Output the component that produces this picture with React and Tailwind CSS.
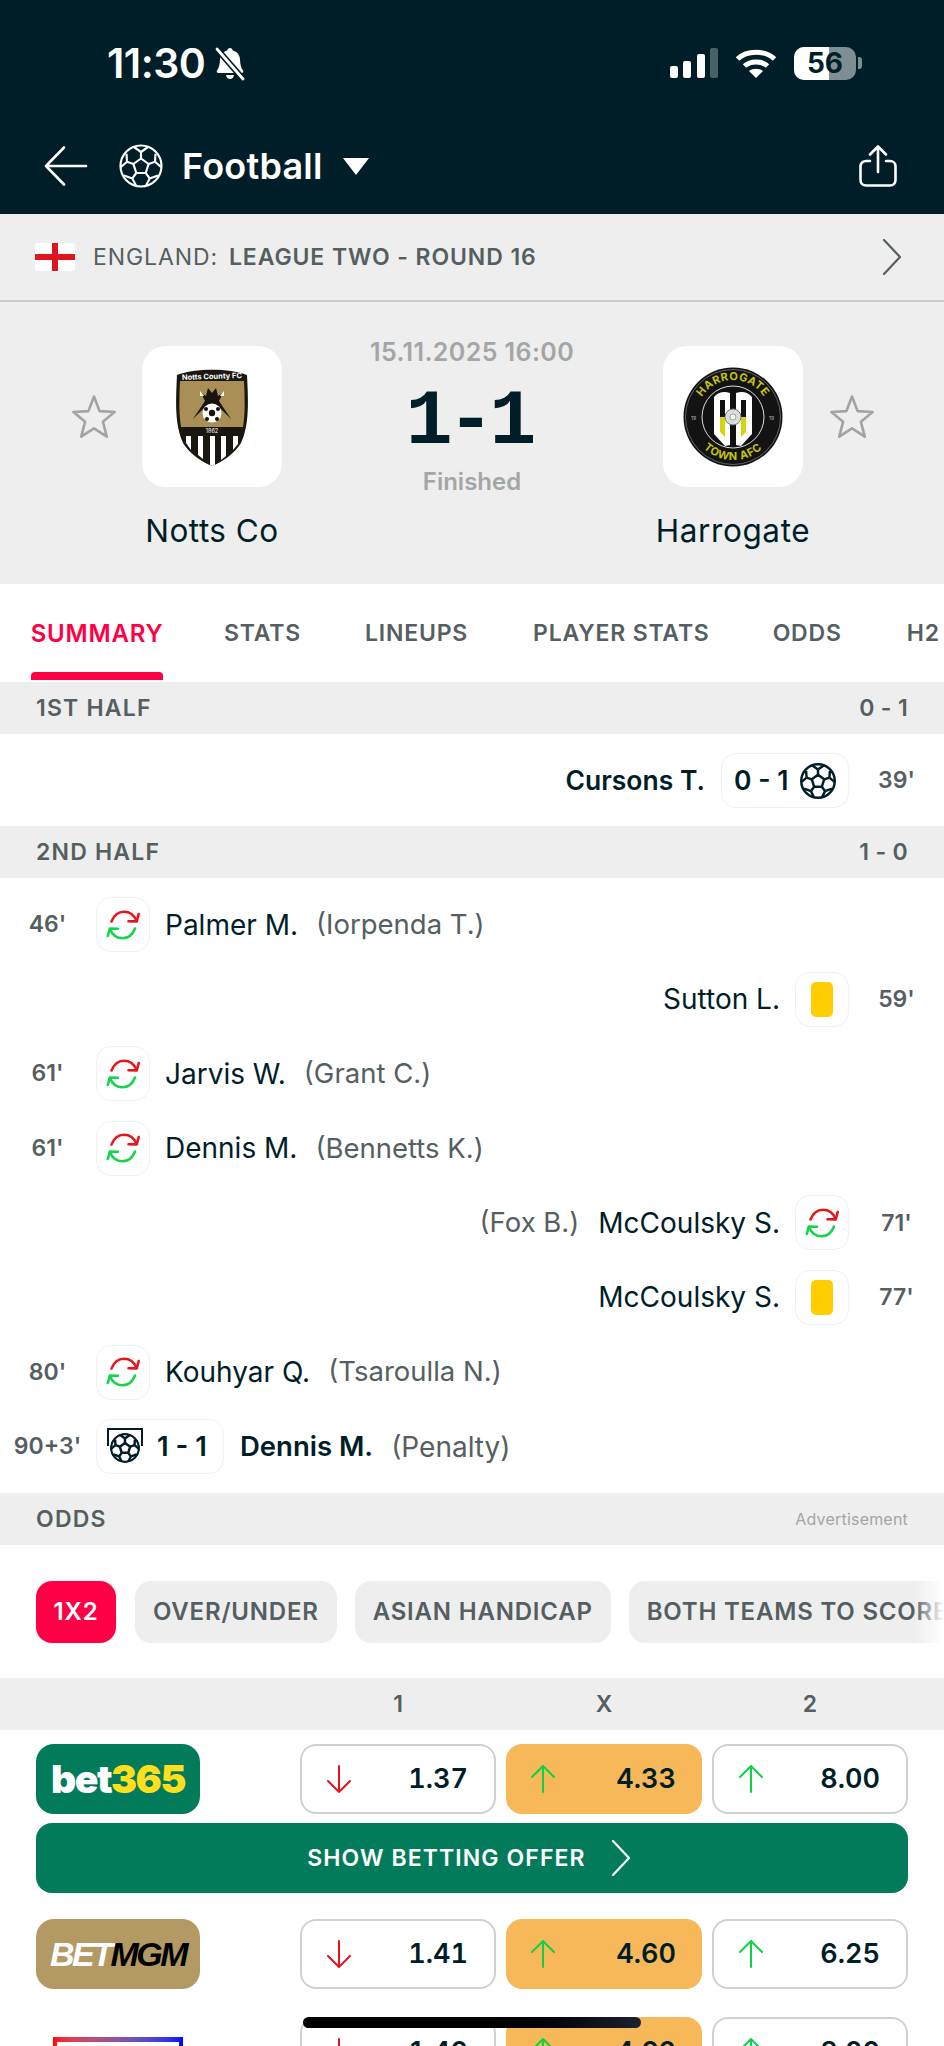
import React from 'react';

const BallIcon = ({ className = '', color = '#fff', sw = 1.8 }) => (
    <svg viewBox="0 0 44 44" className={className} fill="none" stroke={color} strokeWidth={sw * 1.2} strokeLinejoin="round">
        <circle cx="22" cy="22" r="20.5" />
        <path d="M22 14.5l7.6 5.500-2.900 9h-9.400l-2.900-9z" />
        <path d="M22 14.5V8M29.600 20l6.400-2.200M26.700 29l4 5.400M17.300 29l-4 5.400M14.400 20L8 17.800" />
        <path d="M22 8l-7-5M22 8l7-5M36 17.800l.5-8M36 17.800l6 5.200M30.700 34.400l8.300-3M30.700 34.400l-3.700 7.100M13.300 34.400l-8.300-3M13.300 34.400l3.700 7.100M8 17.800l-.5-8M8 17.800l-6 5.200" />
    </svg>
);

const SubIcon = () => (
    <svg viewBox="0 0 36 30" className="w-[36px] h-[30px]" fill="none" strokeWidth="2.600" strokeLinecap="round" strokeLinejoin="round">
        <path d="M6.500 11.500C9 5 14 1.800 19 1.800c6 0 10 3 12.500 9" stroke="#e8141c" />
        <path d="M23.500 11.200l8.200.2 2-7.400" stroke="#e8141c" />
        <path d="M30 18.500c-2.500 6.500-7.500 9.700-12.500 9.700-6 0-10-3-12.500-9" stroke="#17d44f" />
        <path d="M13 18.800l-8.200-.2-2 7.400" stroke="#17d44f" />
    </svg>
);

const CardIcon = () => <div className="w-[22px] h-[35px] rounded-[5px] bg-[#ffcd00]" />;

const IconBox = ({ children }) => (
    <div className="w-[54px] h-[55px] shrink-0 rounded-[15px] border border-[#f0f0f0] bg-white flex items-center justify-center">
        {children}
    </div>
);

const Star = ({ className = '' }) => (
    <svg viewBox="0 0 44 44" className={className} fill="none" stroke="#a3a3a3" strokeWidth="2.600" strokeLinejoin="round">
        <path d="M22 2.500l5.600 14.600 15 .9-11.700 9.800 3.900 14.900L22 34.400 9.200 42.700l3.900-14.900L1.400 18l15-.9z" />
    </svg>
);

const NottsLogo = () => (
    <svg viewBox="0 0 74 100" className="w-[74px] h-[100px]">
        <path d="M2 8C20 1 54 1 72 8c1.500 30 2 50-6 68-6 10-20 20-29 23-9-3-23-13-29-23C0 58 .5 38 2 8z" fill="#1a1710" />
        <path d="M5 14h64c1 20 1 34-1 46H6C4 48 4 34 5 14z" fill="#a98e55" />
        <text x="37" y="12" textAnchor="middle" fontSize="7.500" fontWeight="700" fill="#fff" fontFamily="Inter, sans-serif" transform="rotate(-2 37 12)">Notts County FC</text>
        <path d="M18 52l12-18-4-8 5 3 2-8 4 5 4-5 2 8 5-3-4 8 12 18-12-12H30z" fill="#17140f" />
        <path d="M25 24l4 5-4 0zM49 24l-4 5 4 0z" fill="#fff" />
        <circle cx="37" cy="46" r="9.500" fill="#fff" />
        <circle cx="37" cy="46" r="3.200" fill="#17140f" />
        <circle cx="31" cy="42" r="2" fill="#17140f" />
        <circle cx="43" cy="42" r="2" fill="#17140f" />
        <circle cx="32" cy="52" r="2" fill="#17140f" />
        <circle cx="42" cy="52" r="2" fill="#17140f" />
        <text x="37" y="66" textAnchor="middle" fontSize="5.500" fill="#fff" fontFamily="Inter, sans-serif">1862</text>
        <path d="M11 69h5v14l-5-7zM23 69h5v23l-5-4zM35 69h5v29l-3 1-2-1zM46 69h5v20l-5 4zM58 69h5v8l-5 6z" fill="#fff" />
    </svg>
);

const HarrogateLogo = () => (
    <svg viewBox="0 0 100 100" className="w-[100px] h-[100px]">
        <defs>
            <path id="arcTop" d="M13 50a37 37 0 0 1 74 0" />
            <path id="arcBottom" d="M7 50a43 43 0 0 0 86 0" />
        </defs>
        <circle cx="50" cy="50" r="49.500" fill="#131313" />
        <circle cx="50" cy="50" r="47.500" fill="none" stroke="#777" strokeWidth=".8" />
        <circle cx="50" cy="50" r="31" fill="#111" stroke="#ddd" strokeWidth="1" />
        <text fontSize="11" fontWeight="700" fill="#c5c40c" fontFamily="Inter, sans-serif" letterSpacing=".6">
            <textPath href="#arcTop" startOffset="50%" textAnchor="middle">HARROGATE</textPath>
        </text>
        <text fontSize="11" fontWeight="700" fill="#c5c40c" fontFamily="Inter, sans-serif" letterSpacing=".6">
            <textPath href="#arcBottom" startOffset="50%" textAnchor="middle">TOWN AFC</textPath>
        </text>
        <text x="8" y="53" fontSize="5" fill="#bbb" fontFamily="Inter, sans-serif">19</text>
        <text x="86" y="53" fontSize="5" fill="#bbb" fontFamily="Inter, sans-serif">19</text>
        <path d="M31 30c4-5 10-6 16-4v52l-5 1-11-12z" fill="#fff" />
        <path d="M69 30c-4-5-10-6-16-4v52l5 1 11-12z" fill="#fff" />
        <path d="M37 33h5v32l-5-4zM58 33h5v28l-5 4z" fill="#111" />
        <path d="M37 50h5v20l-5-5zM58 50h5v15l-5 5z" fill="#d7d40e" />
        <circle cx="50" cy="50" r="8" fill="#d9dde0" stroke="#777" strokeWidth="1" />
        <circle cx="50" cy="50" r="3" fill="#f5f5f5" stroke="#888" strokeWidth=".7" />
    </svg>
);

const SectionHeader = ({ left, right, rightClass = 'text-[#555e61] text-[23px] font-semibold tracking-[0.3px]' }) => (
    <div className="h-[52px] bg-[#eeeeee] flex items-center justify-between pl-[36px] pr-[36px] shrink-0">
        <span className="text-[23px] font-semibold tracking-[1.2px] text-[#555e61]">{left}</span>
        <span className={rightClass}>{right}</span>
    </div>
);

const Time = ({ children }) => (
    <div className="w-[95px] shrink-0 text-center text-[23px] font-semibold text-[#555e61] whitespace-nowrap">
        {children}
    </div>
);

const LeftRow = ({ time, icon, name, sub }) => (
    <div className="h-[55px] flex items-center">
        <Time>{time}</Time>
        <div className="ml-[1px]"><IconBox>{icon}</IconBox></div>
        <span className="ml-[15px] text-[28px] text-[#001e28]">{name}</span>
        <span className="ml-[18px] text-[27.5px] text-[#555e61]">{sub}</span>
    </div>
);

const RightRow = ({ time, icon, name, sub }) => (
    <div className="h-[55px] flex items-center justify-end">
        {sub && <span className="mr-[19px] text-[27.5px] text-[#555e61]">{sub}</span>}
        <span className="mr-[15px] text-[28px] text-[#001e28]">{name}</span>
        <IconBox>{icon}</IconBox>
        <Time>{time}</Time>
    </div>
);

const Arrow = ({ dir }) =>
    dir === 'down' ? (
        <svg viewBox="0 0 26 28" className="w-[26px] h-[28px]" fill="none" stroke="#e8141c" strokeWidth="2" strokeLinecap="round">
            <path d="M13 1v26M2 16l11 11 11-11" />
        </svg>
    ) : (
        <svg viewBox="0 0 26 28" className="w-[26px] h-[28px]" fill="none" stroke="#0ed145" strokeWidth="2" strokeLinecap="round">
            <path d="M13 27V1M2 12L13 1l11 11" />
        </svg>
    );

const OddBox = ({ value, dir, highlight }) => (
    <div className={`h-[70px] w-[196px] shrink-0 rounded-[16px] flex items-center justify-between pl-[24px] pr-[26px] ${highlight ? 'bg-[#f6b858]' : 'bg-white border-2 border-[#cfd2d3]'}`}>
        <Arrow dir={dir} />
        <span className="text-[27px] font-semibold tabular-nums text-[#001e28]">{value}</span>
    </div>
);

const OddsRow = ({ logo, odds }) => (
    <div className="flex items-start">
        <div className="w-[264px] shrink-0">{logo}</div>
        <div className="flex gap-[10px]">
            {odds.map((o, i) => (
                <OddBox key={i} value={o[0]} dir={o[1]} highlight={i === 1} />
            ))}
        </div>
    </div>
);

const Bet365 = () => (
    <div className="w-[164px] h-[70px] rounded-[18px] bg-[#027b5b] flex items-center justify-center text-[39px] font-black tracking-[-1.500px]">
        <span className="text-white">bet</span>
        <span className="text-[#ffdf1b]">365</span>
    </div>
);

const BetMgm = () => (
    <div className="w-[164px] h-[70px] rounded-[18px] bg-[#b39a64] flex items-center justify-center text-[34px] italic font-black tracking-[-2.500px] font-['Liberation_Sans',sans-serif]">
        <span className="text-white">BET</span>
        <span className="text-black">MGM</span>
    </div>
);

const Betfred = () => (
    <div className="w-[164px] h-[70px] flex justify-center pt-[20px]">
        <div className="w-[130px] h-[40px] bg-gradient-to-r from-[#ff0000] to-[#0000ff] pt-[5px] px-[4px]">
            <div className="h-full bg-white text-center text-[25px] font-black leading-[30px] tracking-[1px] text-black">BETFRED</div>
        </div>
    </div>
);

const App = () => {
    const chips = ['OVER/UNDER', 'ASIAN HANDICAP', 'BOTH TEAMS TO SCORE'];

    return (
        <div className="w-[944px] h-[2046px] overflow-hidden bg-white relative font-['Inter',sans-serif]">
            {/* status bar + top nav */}
            <div className="h-[214px] bg-[#001e28] px-[36px] text-white flex flex-col">
                <div className="h-[48px] mt-[40px] flex items-center justify-between">
                    <div className="flex items-center ml-[71px] gap-[9px]">
                        <span className="text-[41px] font-semibold tracking-[-0.5px]">11:30</span>
                        <svg viewBox="0 0 32 34" className="w-[32px] h-[34px]" fill="#fff">
                            <path d="M16 1c1.500 0 2.500 1 2.700 2.500 4.500 1 7 4.500 7.300 9 .2 4.500.8 8 3 11 .8 1.200 0 2.500-1.500 2.500H4.500C3 26 2.200 24.700 3 23.500c2.200-3 2.800-6.500 3-11 .3-4.500 2.800-8 7.300-9C13.500 2 14.500 1 16 1z" />
                            <path d="M12 28h8c-.4 2.500-2 4-4 4s-3.600-1.500-4-4z" />
                            <path d="M3 2l26 30" stroke="#001e28" strokeWidth="6" />
                            <path d="M3 2l26 30" stroke="#fff" strokeWidth="2.800" strokeLinecap="round" />
                        </svg>
                    </div>
                    <div className="flex items-center gap-[17px] mr-[46px] -translate-y-[1px]">
                        <svg viewBox="0 0 48 30" className="w-[48px] h-[30px]">
                            <rect x="0" y="18" width="8" height="12" rx="2" fill="#fff" />
                            <rect x="13" y="13" width="8" height="17" rx="2" fill="#fff" />
                            <rect x="27" y="6" width="8" height="24" rx="2" fill="#fff" />
                            <rect x="40" y="0" width="8" height="30" rx="2" fill="#4a6068" />
                        </svg>
                        <svg viewBox="0 0 42 30" className="w-[42px] h-[30px]" fill="none" stroke="#fff" strokeWidth="5">
                            <path d="M2.500 11C12 2 30 2 39.500 11" />
                            <path d="M9.500 18c6-5.500 17-5.500 23 0" />
                            <path d="M21 30l-7-7c4-3 10-3 14 0z" fill="#fff" stroke="none" />
                        </svg>
                        <div className="flex items-center">
                            <div className="relative w-[62px] h-[33px] rounded-[10px] overflow-hidden bg-[#7e8e93] flex items-center justify-center">
                                <div className="absolute left-0 top-0 bottom-0 w-[35px] bg-white" />
                                <span className="relative text-[28px] font-bold text-[#001e28] leading-none">56</span>
                            </div>
                            <div className="w-[4px] h-[12px] ml-[2px] rounded-r-[3px] bg-[#7e8e93]" />
                        </div>
                    </div>
                </div>
                <div className="h-[44px] mt-[56px] flex items-center justify-between">
                    <div className="flex items-center">
                        <svg viewBox="0 0 44 40" className="w-[44px] h-[40px] ml-[8px]" fill="none" stroke="#fff" strokeWidth="2.600" strokeLinecap="round" strokeLinejoin="round">
                            <path d="M42 20H2M20 1.500L2 20l18 18.500" />
                        </svg>
                        <BallIcon className="w-[44px] h-[44px] ml-[31px]" />
                        <span className="ml-[19px] text-[36px] font-semibold tracking-[0.2px]">Football</span>
                        <svg viewBox="0 0 26 17" className="w-[26px] h-[17px] ml-[20px]" fill="#fff">
                            <path d="M0 0h26L13 17z" />
                        </svg>
                    </div>
                    <svg viewBox="0 0 38 42" className="w-[38px] h-[42px] mr-[11px]" fill="none" stroke="#fff" strokeWidth="2.600" strokeLinecap="round" strokeLinejoin="round">
                        <path d="M19 27V2M11 9.500L19 1.500l8 8" />
                        <path d="M11 16H7c-3 0-5.500 2-5.500 5.500V35c0 3.500 2.500 5.500 5.500 5.500h24c3 0 5.500-2 5.500-5.500V21.500C36.500 18 34 16 31 16h-4" />
                    </svg>
                </div>
            </div>

            {/* breadcrumb */}
            <div className="h-[88px] bg-[#eeeeee] border-b-2 border-[#c8cacb] flex items-center pl-[35px] pr-[42px]">
                <div className="w-[40px] h-[28px] bg-white relative shrink-0 rounded-[3px]">
                    <div className="absolute left-0 right-0 top-[11px] h-[6px] bg-[#e0161f]" />
                    <div className="absolute top-0 bottom-0 left-[17px] w-[6px] bg-[#e0161f]" />
                </div>
                <span className="ml-[18px] text-[23px] tracking-[0.9px] text-[#555e61]">ENGLAND:</span>
                <span className="ml-[11px] text-[23px] font-semibold tracking-[0.9px] text-[#555e61]">LEAGUE TWO - ROUND 16</span>
                <svg viewBox="0 0 20 36" className="w-[20px] h-[36px] ml-auto" fill="none" stroke="#555e61" strokeWidth="2.200" strokeLinecap="round" strokeLinejoin="round">
                    <path d="M2 1l16 17L2 35" />
                </svg>
            </div>

            {/* match header */}
            <div className="h-[282px] bg-[#eeeeee] flex items-start">
                <div className="w-[72px] shrink-0" />
                <Star className="w-[44px] h-[44px] mt-[92px] shrink-0" />
                <div className="w-[194px] ml-[-1px] shrink-0 flex flex-col items-center mt-[44px]">
                    <div className="w-[140px] h-[141px] rounded-[24px] bg-white flex items-center justify-center">
                        <NottsLogo />
                    </div>
                    <span className="mt-[26px] text-[31.5px] leading-[36px] tracking-[0.5px] text-[#001e28] whitespace-nowrap">Notts Co</span>
                </div>
                <div className="w-[320px] shrink-0 ml-[3px] flex flex-col items-center mt-[36px]">
                    <span className="text-[25px] leading-[28px] font-semibold tracking-[0.4px] text-[#a3a6a7]">15.11.2025 16:00</span>
                    <span className="mt-[20px] pr-[7px] text-[78px] leading-[72px] font-bold tracking-[-5px] text-[#001e28] font-['Liberation_Mono',monospace]">1-1</span>
                    <span className="mt-[10px] text-[24px] leading-[28px] font-semibold text-[#a3a6a7]">Finished</span>
                </div>
                <div className="w-[196px] shrink-0 flex flex-col items-center mt-[44px] ml-[3px]">
                    <div className="w-[140px] h-[141px] rounded-[24px] bg-white flex items-center justify-center">
                        <HarrogateLogo />
                    </div>
                    <span className="mt-[26px] text-[31.5px] leading-[36px] tracking-[0.6px] text-[#001e28] whitespace-nowrap">Harrogate</span>
                </div>
                <Star className="w-[44px] h-[44px] mt-[92px] shrink-0 ml-[-1px]" />
            </div>

            {/* tabs */}
            <div className="h-[98px] flex items-start pl-[31px] relative overflow-hidden text-[23px] font-semibold tracking-[0.8px] text-[#555e61] whitespace-nowrap">
                <div className="w-[132px] shrink-0 h-full relative flex justify-center pt-[32px] text-[24px] text-[#ff0046]">
                    SUMMARY
                    <div className="absolute left-0 right-0 bottom-[2px] h-[8px] rounded-t-[4px] bg-[#ff0046]" />
                </div>
                <span className="ml-[61px] pt-[32px]">STATS</span>
                <span className="ml-[64px] pt-[32px]">LINEUPS</span>
                <span className="ml-[65px] pt-[32px]">PLAYER STATS</span>
                <span className="ml-[63px] pt-[32px]">ODDS</span>
                <span className="ml-[65px] pt-[32px]">H2</span>
            </div>

            {/* first half */}
            <SectionHeader left="1ST HALF" right="0 - 1" />
            <div className="pt-[19px] pb-[18px]">
                <div className="h-[55px] flex items-center justify-end">
                    <span className="mr-[16px] text-[26.5px] font-semibold text-[#001e28]">Cursons T.</span>
                    <div className="w-[128px] h-[55px] rounded-[15px] border border-[#f0f0f0] bg-white flex items-center justify-between pl-[12px] pr-[12px]">
                        <span className="text-[26.5px] font-semibold text-[#001e28]">0 - 1</span>
                        <BallIcon className="w-[36px] h-[36px]" color="#001e28" sw={2.5} />
                    </div>
                    <Time>39'</Time>
                </div>
            </div>

            {/* second half */}
            <SectionHeader left="2ND HALF" right="1 - 0" />
            <div className="pt-[19px] pb-[19px] flex flex-col gap-[19.6px]">
                <LeftRow time="46'" icon={<SubIcon />} name="Palmer M." sub="(Iorpenda T.)" />
                <RightRow time="59'" icon={<CardIcon />} name="Sutton L." />
                <LeftRow time="61'" icon={<SubIcon />} name="Jarvis W." sub="(Grant C.)" />
                <LeftRow time="61'" icon={<SubIcon />} name="Dennis M." sub="(Bennetts K.)" />
                <RightRow time="71'" icon={<SubIcon />} name="McCoulsky S." sub="(Fox B.)" />
                <RightRow time="77'" icon={<CardIcon />} name="McCoulsky S." />
                <LeftRow time="80'" icon={<SubIcon />} name="Kouhyar Q." sub="(Tsaroulla N.)" />
                <div className="h-[55px] flex items-center">
                    <Time>90+3'</Time>
                    <div className="ml-[1px] w-[128px] h-[55px] rounded-[15px] border border-[#f0f0f0] bg-white flex items-center pl-[10px]">
                        <div className="relative w-[36px] h-[36px]">
                            <div className="absolute left-0 right-0 -top-[1px] h-[18px] border-t-2 border-x-2 border-[#001e28]" />
                            <BallIcon className="absolute left-[3px] top-[4px] w-[30px] h-[30px] bg-white rounded-full" color="#001e28" sw={3} />
                        </div>
                        <span className="ml-[14px] text-[27.5px] font-semibold text-[#001e28]">1 - 1</span>
                    </div>
                    <span className="ml-[16px] text-[27.5px] font-semibold text-[#001e28]">Dennis M.</span>
                    <span className="ml-[18px] text-[28px] text-[#555e61]">(Penalty)</span>
                </div>
            </div>

            {/* odds */}
            <SectionHeader left="ODDS" right="Advertisement" rightClass="text-[16px] tracking-[0.2px] text-[#a3a6a7]" />
            <div className="h-[133px] relative overflow-hidden flex items-center gap-[18px] pl-[36px] whitespace-nowrap text-[24px] font-semibold tracking-[0.8px]">
                <div className="h-[62px] w-[80px] shrink-0 rounded-[16px] bg-[#ff0046] text-white flex items-center justify-center mr-[1px]">1X2</div>
                {chips.map((c) => (
                    <div key={c} className="h-[62px] shrink-0 rounded-[16px] bg-[#eeeeee] text-[#555e61] flex items-center px-[18px]">{c}</div>
                ))}
                <div className="absolute right-0 top-0 bottom-0 w-[30px] bg-gradient-to-r from-white/0 to-white" />
            </div>
            <div className="h-[52px] bg-[#eeeeee] flex items-center pl-[300px] pr-[36px] text-[23px] font-semibold text-[#555e61] text-center">
                <span className="w-[196px]">1</span>
                <span className="w-[196px] mx-[10px]">X</span>
                <span className="w-[196px]">2</span>
            </div>
            <div className="px-[36px] pt-[14px] flex flex-col">
                <OddsRow logo={<Bet365 />} odds={[['1.37', 'down'], ['4.33', 'up'], ['8.00', 'up']]} />
                <div className="mt-[9px] h-[70px] rounded-[16px] bg-[#027b5b] flex items-center justify-center pr-[6px] text-white text-[23px] font-semibold tracking-[1.1px]">
                    SHOW BETTING OFFER
                    <svg viewBox="0 0 20 36" className="w-[20px] h-[36px] ml-[25px]" fill="none" stroke="#fff" strokeWidth="2.200" strokeLinecap="round" strokeLinejoin="round">
                        <path d="M2 1l16 17L2 35" />
                    </svg>
                </div>
                <div className="mt-[26px]">
                    <OddsRow logo={<BetMgm />} odds={[['1.41', 'down'], ['4.60', 'up'], ['6.25', 'up']]} />
                </div>
                <div className="mt-[28px]">
                    <OddsRow logo={<Betfred />} odds={[['1.40', 'down'], ['4.60', 'up'], ['8.00', 'up']]} />
                </div>
            </div>

            {/* home indicator */}
            <div className="absolute left-[303px] top-[2017px] w-[338px] h-[11px] rounded-full bg-gradient-to-r from-black via-black to-[#1c2230]" />
        </div>
    );
};

export default App;
